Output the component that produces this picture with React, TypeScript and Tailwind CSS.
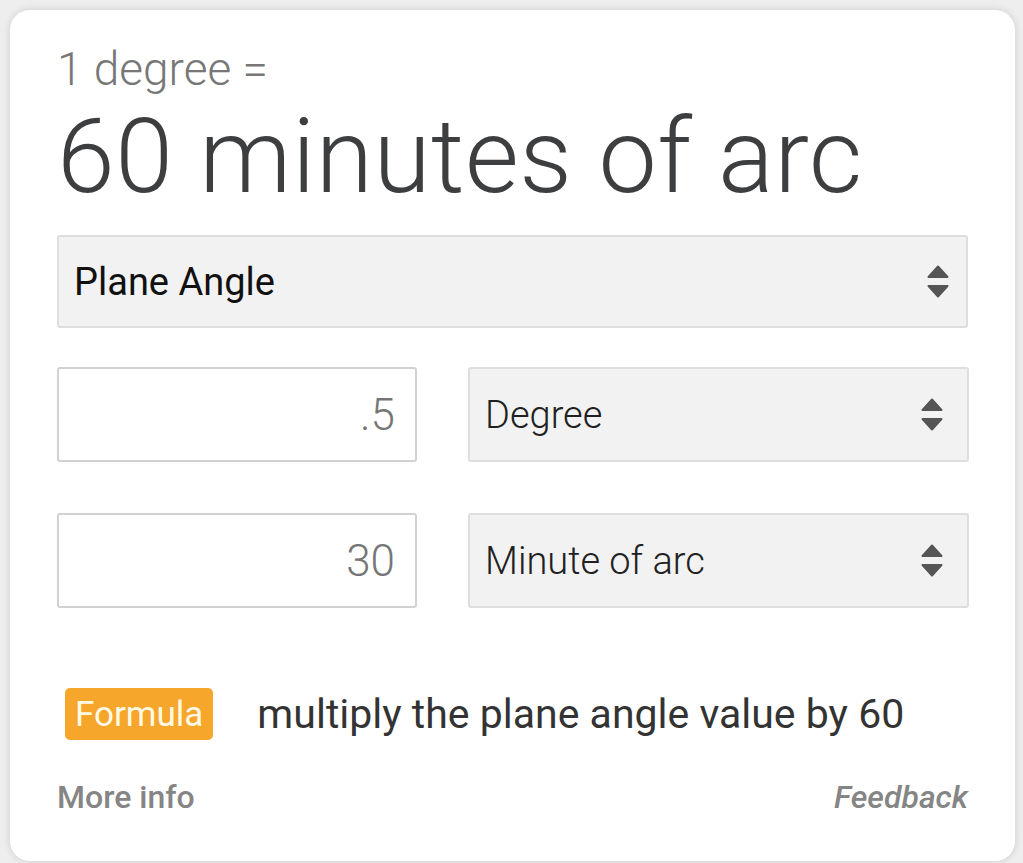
import React from 'react';

const font = { fontFamily: 'Roboto, "Noto Sans", sans-serif' };

function UpDown({ className = '' }: { className?: string }) {
  return (
    <svg width="22" height="33" viewBox="0 0 22 33" className={className} aria-hidden="true">
      <path d="M11 1.5 L20.5 12 H1.5 Z" fill="#555" stroke="#555" strokeWidth="2" strokeLinejoin="round" />
      <path d="M1.5 21 H20.5 L11 31.5 Z" fill="#555" stroke="#555" strokeWidth="2" strokeLinejoin="round" />
    </svg>
  );
}

function Select({ label, light, iconPad }: { label: string; light?: boolean; iconPad: string }) {
  return (
    <div
      className={`flex h-full items-center justify-between rounded-[3px] border-2 border-[#dedede] bg-[#f2f2f2] pl-[15px] ${iconPad}`}
    >
      <span className={`text-[38px] leading-none ${light ? 'font-light text-[#212121]' : 'font-normal text-[#111]'}`}>
        {label}
      </span>
      <UpDown />
    </div>
  );
}

function NumberBox({ value }: { value: string }) {
  return (
    <div className="flex h-full items-center justify-end rounded-[3px] border-2 border-[#d2d2d2] bg-white pr-[20px]">
      <span className="text-[44px] font-light leading-none text-[#767676]">{value}</span>
    </div>
  );
}

function Row({ value, unit }: { value: string; unit: string }) {
  return (
    <div className="grid h-[95px] grid-cols-[360px_501px] gap-[51px]">
      <NumberBox value={value} />
      <Select label={unit} light iconPad="pr-[24px]" />
    </div>
  );
}

export default function App() {
  return (
    <div className="h-[863px] w-[1023px] bg-[#eeeeee] p-[10px]" style={font}>
      <div className="h-[851px] w-[1005px] rounded-[20px] bg-white px-[47px] pt-[36px] shadow-[0_0_8px_rgba(0,0,0,0.14)]">
        <div className="text-[46px] font-light leading-none text-[#777]">1 degree =</div>
        <div className="mt-[13px] text-[104px] font-light leading-none tracking-[0.5px] text-[#3c3e40]">
          60 minutes of arc
        </div>

        <div className="mt-[26px] h-[93px]">
          <Select label="Plane Angle" iconPad="pr-[17px]" />
        </div>

        <div className="mt-[39px]">
          <Row value=".5" unit="Degree" />
        </div>
        <div className="mt-[51px]">
          <Row value="30" unit="Minute of arc" />
        </div>

        <div className="mt-[80px] flex items-center pl-[8px]">
          <span className="flex h-[52px] items-center rounded-[5px] bg-[#f5a62b] px-[10px] text-[35px] leading-none text-[#fff9e6]">
            Formula
          </span>
          <span className="ml-[44px] text-[41px] leading-none text-[#333]">
            multiply the plane angle value by 60
          </span>
        </div>

        <div className="mt-[41px] flex items-center justify-between">
          <a className="text-[32px] font-medium leading-none text-[#858585]">More info</a>
          <a className="text-[32px] font-medium italic leading-none text-[#858585]">Feedback</a>
        </div>
      </div>
    </div>
  );
}
